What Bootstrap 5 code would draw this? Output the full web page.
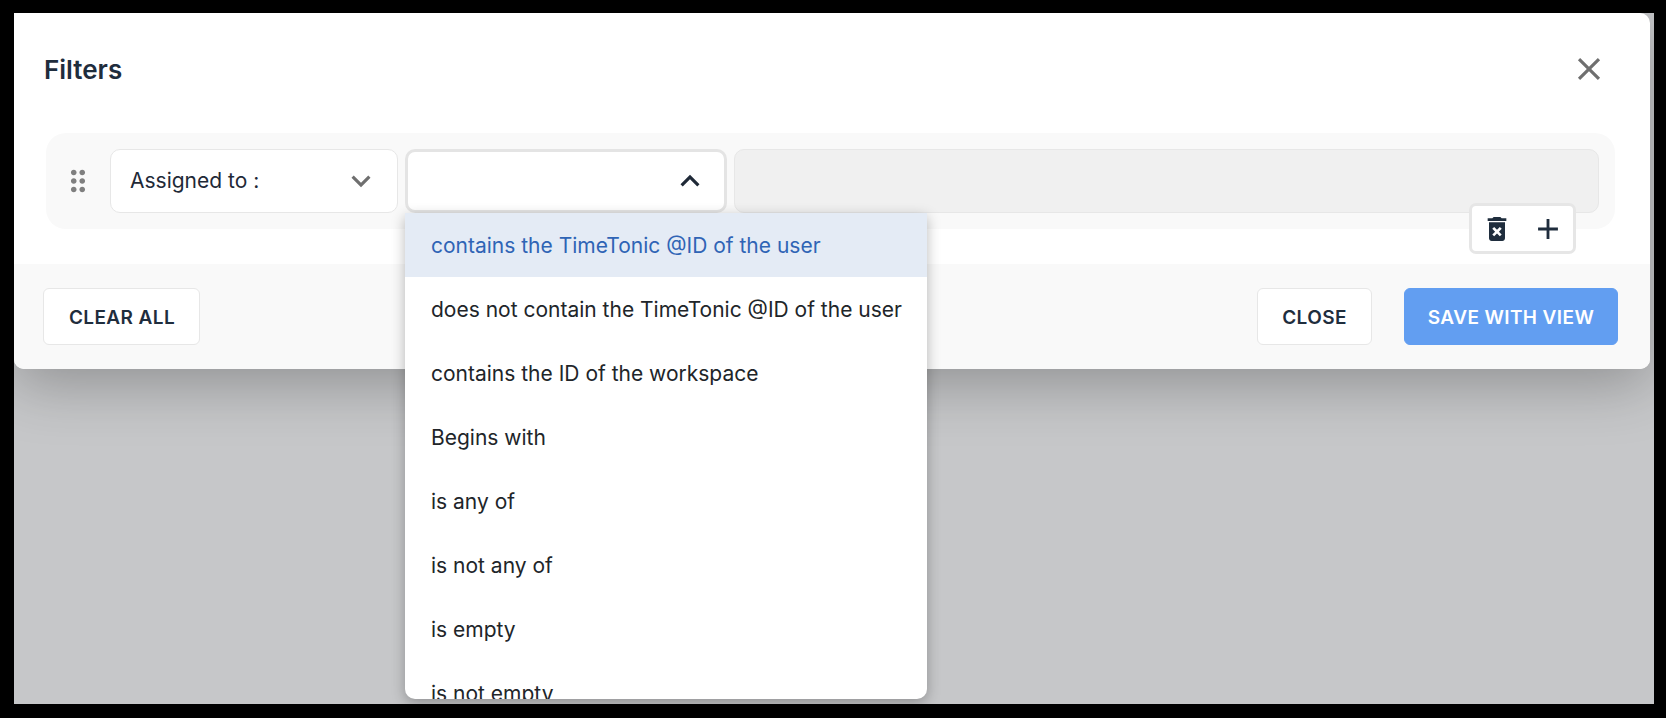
<!DOCTYPE html>
<html lang="en">
<head>
<meta charset="utf-8">
<title>Filters</title>
<link href="https://cdn.jsdelivr.net/npm/bootstrap@5.3.0/dist/css/bootstrap.min.css" rel="stylesheet">
<style>
html,body{height:100%;margin:0}
body{background:#000;font-family:Inter,"Liberation Sans",sans-serif;color:#1f2937;overflow:hidden;padding:13px 12px 14px 14px}
.shade{background:#c6c7c9;height:691px;position:relative;overflow:hidden}
.sheet{width:1636px;height:356px;background:#fff;border-radius:0 10px 10px 10px;box-shadow:0 14px 60px rgba(0,0,0,.28);display:flex;flex-direction:column}
.sheet-head{height:120px;padding:0 42px 0 30px;flex:none}
.sheet-title{font-size:26px;font-weight:600;line-height:1;color:#1f2d3d;margin:0;padding-top:44px}
.sheet-x{width:38px;height:38px;fill:#6f6f6f;margin-top:37px}
.rule-row{height:96px;margin:0 35px 0 32px;padding:16px 16px 16px 15px;background:#f9f9f9;border-radius:20px;flex:none;position:relative}
.grip{width:34px;height:34px;fill:#7f7f7f;margin-right:15px;flex:none}
.pick{height:64px;background:#fff;border:1px solid #e7e7e7;border-radius:10px;flex:none;padding:0 17px 0 19px;font-size:21px;color:#1f2937}
.pick-a{width:288px;margin-right:7px}
.pick-a svg{width:38px;height:38px;fill:#6f6f6f}
.pick-b{width:322px;margin-right:7px;border:3px solid #e4e4e4;padding-right:15px}
.pick-b svg{width:38px;height:38px;fill:#1f2937}
.pick-c{height:64px;flex:1;background:#f0f0f0;border:1px solid #e7e7e7;border-radius:10px}
.tools{position:absolute;right:39px;top:70px;width:107px;height:51px;background:#fff;border:3px solid #e6e6e6;border-radius:7px;padding:0 0 0 9px}
.tools svg{fill:#1f2d3d;flex:none}
.tool-del{width:32px;height:32px}
.tool-add{width:34px;height:34px;margin-left:18px}
.foot{margin-top:35px;height:105px;background:#f9f9f9;border-radius:0 0 10px 10px;padding:24px 32px 24px 29px;flex:none}
.act{height:57px;font-size:19px;font-weight:600;letter-spacing:.4px;border-radius:6px;padding:3px 0 0 0;background:#fff;border:1px solid #e7e7e7;color:#1f2d3d;text-transform:uppercase}
.act-clear{width:157px;padding-left:1px}
.act-close{width:115px;margin-right:32px}
.act-save{width:214px;background:#629ef1;border-color:#629ef1;color:#fff}
.opts{position:absolute;left:391px;top:200px;width:522px;height:486px;background:#fff;border-radius:0 0 10px 10px;box-shadow:0 4px 14px rgba(0,0,0,.28);overflow:hidden;z-index:5}
.opt{height:64px;padding:1px 25px 0 26px;font-size:21px;color:#212529;display:flex;align-items:center;white-space:nowrap}
.opt-on{background:#e4ebf5;color:#2f64b5}
</style>
</head>
<body>
<div class="shade">
  <div class="sheet">
    <div class="sheet-head d-flex justify-content-between align-items-start">
      <h5 class="sheet-title">Filters</h5>
      <svg class="sheet-x" viewBox="0 0 24 24"><path d="M19 6.41 17.59 5 12 10.59 6.41 5 5 6.41 10.59 12 5 17.59 6.41 19 12 13.41 17.59 19 19 17.59 13.41 12z"/></svg>
    </div>
    <div class="rule-row d-flex align-items-center">
      <svg class="grip" viewBox="0 0 24 24"><path d="M11 18c0 1.1-.9 2-2 2s-2-.9-2-2 .9-2 2-2 2 .9 2 2zm-2-8c-1.1 0-2 .9-2 2s.9 2 2 2 2-.9 2-2-.9-2-2-2zm0-6c-1.1 0-2 .9-2 2s.9 2 2 2 2-.9 2-2-.9-2-2-2zm6 4c1.1 0 2-.9 2-2s-.9-2-2-2-2 .9-2 2 .9 2 2 2zm0 2c-1.1 0-2 .9-2 2s.9 2 2 2 2-.9 2-2-.9-2-2-2zm0 6c-1.1 0-2 .9-2 2s.9 2 2 2 2-.9 2-2-.9-2-2-2z"/></svg>
      <div class="pick pick-a d-flex align-items-center justify-content-between">
        <span>Assigned to :</span>
        <svg viewBox="0 0 24 24"><path d="M16.59 8.59 12 13.17 7.41 8.59 6 10l6 6 6-6z"/></svg>
      </div>
      <div class="pick pick-b d-flex align-items-center justify-content-end">
        <svg viewBox="0 0 24 24"><path d="M12 8l-6 6 1.41 1.41L12 10.83l4.59 4.58L18 14z"/></svg>
      </div>
      <div class="pick-c"></div>
      <div class="tools d-flex align-items-center">
        <svg class="tool-del" viewBox="0 0 24 24"><path d="M6 19c0 1.1.9 2 2 2h8c1.1 0 2-.9 2-2V7H6v12zm2.46-7.12l1.41-1.41L12 12.59l2.12-2.12 1.41 1.41L13.41 14l2.12 2.12-1.41 1.41L12 15.41l-2.12 2.12-1.41-1.41L10.59 14l-2.13-2.12zM15.5 4l-1-1h-5l-1 1H5v2h14V4z"/></svg>
        <svg class="tool-add" viewBox="0 0 24 24"><path d="M19 13h-6v6h-2v-6H5v-2h6V5h2v6h6v2z"/></svg>
      </div>
    </div>
    <div class="foot d-flex align-items-center">
      <button type="button" class="btn act act-clear">Clear all</button>
      <button type="button" class="btn act act-close ms-auto">Close</button>
      <button type="button" class="btn act act-save">Save with view</button>
    </div>
  </div>
  <div class="opts">
    <div class="opt opt-on">contains the TimeTonic @ID of the user</div>
    <div class="opt">does not contain the TimeTonic @ID of the user</div>
    <div class="opt">contains the ID of the workspace</div>
    <div class="opt">Begins with</div>
    <div class="opt">is any of</div>
    <div class="opt">is not any of</div>
    <div class="opt">is empty</div>
    <div class="opt">is not empty</div>
  </div>
</div>
<script src="https://cdn.jsdelivr.net/npm/bootstrap@5.3.0/dist/js/bootstrap.bundle.min.js"></script>
</body>
</html>
